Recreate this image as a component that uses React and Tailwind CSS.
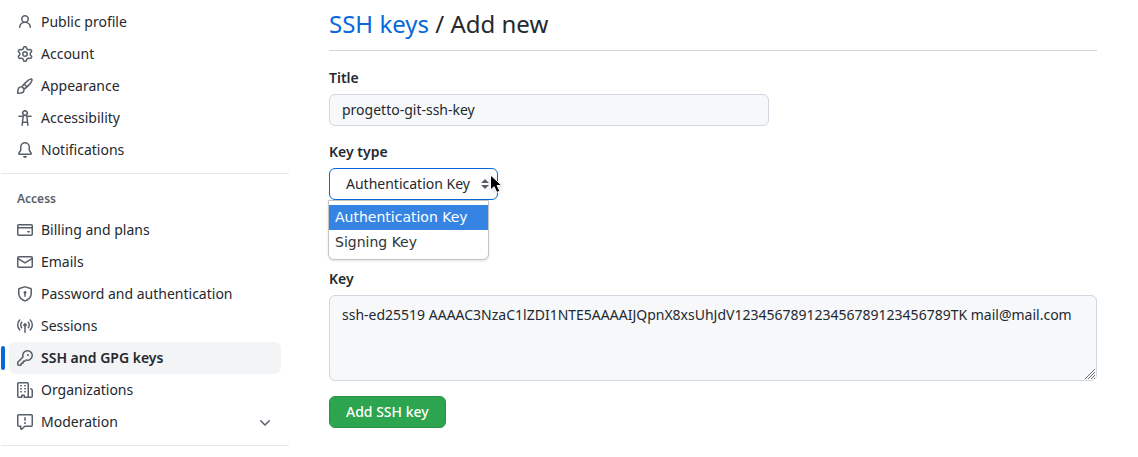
import { useState } from "react";

const ICONS = {
  person:
    "M10.561 8.073a6.005 6.005 0 0 1 3.432 5.142.75.75 0 1 1-1.498.07 4.5 4.5 0 0 0-8.99 0 .75.75 0 0 1-1.498-.07 6.004 6.004 0 0 1 3.431-5.142 3.999 3.999 0 1 1 5.123 0ZM10.5 5a2.5 2.5 0 1 0-5 0 2.5 2.5 0 0 0 5 0Z",
  gear:
    "M8 0a8.2 8.2 0 0 1 .701.031C9.444.095 9.99.645 10.16 1.29l.288 1.107c.018.066.079.158.212.224.231.114.454.243.668.386.123.082.233.09.299.071l1.103-.303c.644-.176 1.392.021 1.82.63.27.385.506.792.704 1.218.315.675.111 1.422-.364 1.891l-.814.806c-.049.048-.098.147-.088.294.016.257.016.515 0 .772-.01.147.038.246.088.294l.814.806c.475.469.679 1.216.364 1.891a7.977 7.977 0 0 1-.704 1.217c-.428.61-1.176.807-1.82.63l-1.102-.302c-.067-.019-.177-.011-.3.071a5.909 5.909 0 0 1-.668.386c-.133.066-.194.158-.211.224l-.29 1.106c-.168.646-.715 1.196-1.458 1.26a8.006 8.006 0 0 1-1.402 0c-.743-.064-1.289-.614-1.458-1.26l-.289-1.106c-.018-.066-.079-.158-.212-.224a5.738 5.738 0 0 1-.668-.386c-.123-.082-.233-.09-.299-.071l-1.103.303c-.644.176-1.392-.021-1.82-.63a8.12 8.12 0 0 1-.704-1.218c-.315-.675-.111-1.422.363-1.891l.815-.806c.05-.048.098-.147.088-.294a6.214 6.214 0 0 1 0-.772c.01-.147-.038-.246-.088-.294l-.815-.806C.635 6.045.431 5.298.746 4.623a7.92 7.92 0 0 1 .704-1.217c.428-.61 1.176-.807 1.82-.63l1.102.302c.067.019.177.011.3-.071.214-.143.437-.272.668-.386.133-.066.194-.158.211-.224l.29-1.106C6.009.645 6.556.095 7.299.03 7.53.01 7.764 0 8 0Zm-.571 1.525c-.036.003-.108.036-.137.146l-.289 1.105c-.147.561-.549.967-.998 1.189-.173.086-.34.183-.5.29-.417.278-.97.423-1.529.27l-1.103-.303c-.109-.03-.175.016-.195.045-.22.312-.412.644-.573.99-.014.031-.021.11.059.19l.815.806c.411.406.562.957.53 1.456a4.709 4.709 0 0 0 0 .582c.032.499-.119 1.05-.53 1.456l-.815.806c-.081.08-.073.159-.059.19.162.346.353.677.573.989.02.03.085.076.195.046l1.102-.303c.56-.153 1.113-.008 1.53.27.161.107.328.204.501.29.447.222.85.629.997 1.189l.289 1.105c.029.109.101.143.137.146a6.6 6.6 0 0 0 1.142 0c.036-.003.108-.036.137-.146l.289-1.105c.147-.561.549-.967.998-1.189.173-.086.34-.183.5-.29.417-.278.97-.423 1.529-.27l1.103.303c.109.029.175-.016.195-.045.22-.313.411-.644.573-.99.014-.031.021-.11-.059-.19l-.815-.806c-.411-.406-.562-.957-.53-1.456a4.709 4.709 0 0 0 0-.582c-.032-.499.119-1.05.53-1.456l.815-.806c.081-.08.073-.159.059-.19a6.464 6.464 0 0 0-.573-.989c-.02-.03-.085-.076-.195-.046l-1.102.303c-.56.153-1.113.008-1.53-.27a4.44 4.44 0 0 0-.501-.29c-.447-.222-.85-.629-.997-1.189l-.289-1.105c-.029-.11-.101-.143-.137-.146a6.6 6.6 0 0 0-1.142 0ZM11 8a3 3 0 1 1-6 0 3 3 0 0 1 6 0ZM9.5 8a1.5 1.5 0 1 0-3.001.001A1.5 1.5 0 0 0 9.5 8Z",
  paintbrush:
    "M11.134 1.535c.7-.509 1.416-.942 2.076-1.155.649-.21 1.463-.267 2.069.34.603.601.568 1.411.368 2.07-.202.668-.624 1.39-1.125 2.096-1.011 1.424-2.496 2.987-3.775 4.249-1.098 1.084-2.132 1.839-3.04 2.3a3.744 3.744 0 0 1-1.055 3.217c-.431.431-1.065.691-1.657.861-.614.177-1.294.287-1.914.357A21.151 21.151 0 0 1 .797 16H.743a.75.75 0 0 1-.743-.742v-.054a21.25 21.25 0 0 1 .13-2.284c.067-.647.187-1.287.358-1.914.17-.591.43-1.226.86-1.657a3.746 3.746 0 0 1 3.227-1.054c.466-.893 1.225-1.907 2.314-2.982 1.271-1.255 2.833-2.75 4.245-3.777ZM1.62 13.089c-.051.464-.086.929-.104 1.395.466-.018.932-.053 1.396-.104a10.511 10.511 0 0 0 1.668-.309c.526-.151.856-.325 1.011-.48a2.25 2.25 0 1 0-3.182-3.182c-.155.155-.329.485-.48 1.01a10.515 10.515 0 0 0-.309 1.67Zm10.396-10.34c-1.224.89-2.605 2.189-3.822 3.384l1.718 1.718c1.21-1.205 2.51-2.597 3.387-3.833.47-.662.78-1.227.912-1.662.134-.444.032-.551.009-.575h-.001V1.78c-.014-.014-.113-.113-.548.027-.432.14-.995.462-1.655.942Zm-4.832 7.266-.001.001a9.859 9.859 0 0 0 1.63-1.142L7.155 7.216a9.7 9.7 0 0 0-1.161 1.607c.482.302.889.71 1.19 1.192Z",
  accessibility:
    "M9.923 5.302c.063.063.122.129.178.198H14A.75.75 0 0 1 14 7h-3.3l.578 5.163.362 2.997a.75.75 0 0 1-1.49.18L9.868 13H6.132l-.282 2.34a.75.75 0 0 1-1.49-.18l.362-2.997L5.3 7H2a.75.75 0 0 1 0-1.5h3.9a2.54 2.54 0 0 1 .176-.198 3 3 0 1 1 3.847 0ZM9.2 7.073h-.001a1.206 1.206 0 0 0-2.398 0L6.305 11.5h3.39ZM9.5 3a1.5 1.5 0 1 0-3.001.001A1.5 1.5 0 0 0 9.5 3Z",
  bell:
    "M8 16a2 2 0 0 0 1.985-1.75c.017-.137-.097-.25-.235-.25h-3.5c-.138 0-.252.113-.235.25A2 2 0 0 0 8 16ZM3 5a5 5 0 0 1 10 0v2.947c0 .05.015.098.042.139l1.703 2.555A1.519 1.519 0 0 1 13.482 13H2.518a1.516 1.516 0 0 1-1.263-2.36l1.703-2.554A.255.255 0 0 0 3 7.947Zm5-3.5A3.5 3.5 0 0 0 4.5 5v2.947c0 .346-.102.683-.294.97l-1.703 2.556a.017.017 0 0 0-.003.01l.001.006c0 .002.002.004.004.006l.006.004.007.001h10.964l.007-.001.006-.004.004-.006.001-.007a.017.017 0 0 0-.003-.01l-1.703-2.554a1.745 1.745 0 0 1-.294-.97V5A3.5 3.5 0 0 0 8 1.5Z",
  card:
    "M10.75 9a.75.75 0 0 0 0 1.5h1.5a.75.75 0 0 0 0-1.5h-1.5ZM0 3.75C0 2.784.784 2 1.75 2h12.5c.966 0 1.75.784 1.75 1.75v8.5A1.75 1.75 0 0 1 14.25 14H1.75A1.75 1.75 0 0 1 0 12.25ZM14.5 6.5h-13v5.75c0 .138.112.25.25.25h12.5a.25.25 0 0 0 .25-.25Zm0-2.75a.25.25 0 0 0-.25-.25H1.75a.25.25 0 0 0-.25.25V5h13Z",
  mail:
    "M1.75 2h12.5c.966 0 1.75.784 1.75 1.75v8.5A1.75 1.75 0 0 1 14.25 14H1.75A1.75 1.75 0 0 1 0 12.25v-8.5C0 2.784.784 2 1.75 2ZM1.5 12.251c0 .138.112.25.25.25h12.5a.25.25 0 0 0 .25-.25V5.809L8.38 9.397a.75.75 0 0 1-.76 0L1.5 5.809v6.442Zm13-8.181v-.32a.25.25 0 0 0-.25-.25H1.75a.25.25 0 0 0-.25.25v.32L8 7.88Z",
  shield:
    "m8.533.133 5.25 1.68A1.75 1.75 0 0 1 15 3.48V7c0 1.566-.32 3.182-1.303 4.682-.983 1.498-2.585 2.813-5.032 3.855a1.697 1.697 0 0 1-1.33 0c-2.447-1.042-4.049-2.357-5.032-3.855C1.32 10.182 1 8.566 1 7V3.48a1.75 1.75 0 0 1 1.217-1.667l5.25-1.68a1.748 1.748 0 0 1 1.066 0Zm-.61 1.429.001.001-5.25 1.68a.251.251 0 0 0-.174.237V7c0 1.36.275 2.666 1.057 3.859.784 1.194 2.121 2.342 4.366 3.298a.196.196 0 0 0 .154 0c2.245-.957 3.582-2.103 4.366-3.297C13.225 9.666 13.5 8.358 13.5 7V3.48a.25.25 0 0 0-.174-.238l-5.25-1.68a.25.25 0 0 0-.153 0ZM9.5 6.5c0 .536-.286 1.032-.75 1.3v2.45a.75.75 0 0 1-1.5 0V7.8A1.5 1.5 0 1 1 9.5 6.5Z",
  broadcast:
    "M8.75 8.582v5.668a.75.75 0 0 1-1.5 0V8.582a1.75 1.75 0 1 1 1.5 0Zm3.983-7.125a.75.75 0 0 1 1.06.026A7.976 7.976 0 0 1 16 7c0 2.139-.84 4.083-2.207 5.517a.75.75 0 1 1-1.086-1.034A6.474 6.474 0 0 0 14.5 7a6.474 6.474 0 0 0-1.793-4.483.75.75 0 0 1 .026-1.06Zm-9.466 0c.3.286.312.76.026 1.06A6.474 6.474 0 0 0 1.5 7a6.47 6.47 0 0 0 1.793 4.483.75.75 0 0 1-1.086 1.034A7.973 7.973 0 0 1 0 7c0-2.139.84-4.083 2.207-5.517a.75.75 0 0 1 1.06-.026Zm8.556 2.321A4.988 4.988 0 0 1 13 7a4.988 4.988 0 0 1-1.177 3.222.75.75 0 1 1-1.146-.967A3.487 3.487 0 0 0 11.5 7c0-.86-.309-1.645-.823-2.255a.75.75 0 0 1 1.146-.967Zm-6.492.958A3.48 3.48 0 0 0 4.5 7a3.48 3.48 0 0 0 .823 2.255.75.75 0 0 1-1.146.967A4.981 4.981 0 0 1 3 7a4.982 4.982 0 0 1 1.188-3.236.75.75 0 1 1 1.143.972Z",
  key:
    "M10.5 0a5.499 5.499 0 1 1-1.288 10.848l-.932.932a.749.749 0 0 1-.53.22H7v.75a.749.749 0 0 1-.22.53l-.5.5a.749.749 0 0 1-.53.22H5v.75a.749.749 0 0 1-.22.53l-.5.5a.749.749 0 0 1-.53.22h-2A1.75 1.75 0 0 1 0 14.25v-2c0-.199.079-.389.22-.53l4.932-4.932A5.5 5.5 0 0 1 10.5 0Zm-4 5.5c-.001.431.069.86.205 1.269a.75.75 0 0 1-.181.768L1.5 12.56v1.69c0 .138.112.25.25.25h1.69l.06-.06v-1.19a.75.75 0 0 1 .75-.75h1.19l.06-.06v-1.19a.75.75 0 0 1 .75-.75h1.19l1.023-1.025a.75.75 0 0 1 .768-.18A4 4 0 1 0 6.5 5.5ZM11 6a1 1 0 1 1 0-2 1 1 0 0 1 0 2Z",
  organization:
    "M1.75 16A1.75 1.75 0 0 1 0 14.25V1.75C0 .784.784 0 1.75 0h8.5C11.216 0 12 .784 12 1.75v12.5c0 .085-.006.168-.018.25h2.268a.25.25 0 0 0 .25-.25V8.285a.25.25 0 0 0-.111-.208l-1.055-.703a.749.749 0 1 1 .832-1.248l1.055.703c.487.325.779.871.779 1.456v5.965A1.75 1.75 0 0 1 14.25 16h-3.5a.766.766 0 0 1-.197-.026c-.099.017-.2.026-.303.026h-3a.75.75 0 0 1-.75-.75V14h-1v1.25a.75.75 0 0 1-.75.75Zm-.25-1.75c0 .138.112.25.25.25H4v-1.25a.75.75 0 0 1 .75-.75h2.5a.75.75 0 0 1 .75.75v1.25h2.25a.25.25 0 0 0 .25-.25V1.75a.25.25 0 0 0-.25-.25h-8.5a.25.25 0 0 0-.25.25ZM3.75 6h.5a.75.75 0 0 1 0 1.5h-.5a.75.75 0 0 1 0-1.5ZM3 3.75A.75.75 0 0 1 3.75 3h.5a.75.75 0 0 1 0 1.5h-.5A.75.75 0 0 1 3 3.75Zm4 3A.75.75 0 0 1 7.75 6h.5a.75.75 0 0 1 0 1.5h-.5A.75.75 0 0 1 7 6.75ZM7.75 3h.5a.75.75 0 0 1 0 1.5h-.5a.75.75 0 0 1 0-1.5ZM3 9.75A.75.75 0 0 1 3.75 9h.5a.75.75 0 0 1 0 1.5h-.5A.75.75 0 0 1 3 9.75ZM7.75 9h.5a.75.75 0 0 1 0 1.5h-.5a.75.75 0 0 1 0-1.5Z",
  report:
    "M0 1.75C0 .784.784 0 1.75 0h12.5C15.216 0 16 .784 16 1.75v9.5A1.75 1.75 0 0 1 14.25 13H8.06l-2.573 2.573A1.458 1.458 0 0 1 3 14.543V13H1.75A1.75 1.75 0 0 1 0 11.25Zm1.75-.25a.25.25 0 0 0-.25.25v9.5c0 .138.112.25.25.25h2a.75.75 0 0 1 .75.75v2.19l2.72-2.72a.749.749 0 0 1 .53-.22h6.5a.25.25 0 0 0 .25-.25v-9.5a.25.25 0 0 0-.25-.25Zm7 2.25v2.5a.75.75 0 0 1-1.5 0v-2.5a.75.75 0 0 1 1.5 0ZM9 9a1 1 0 1 1-2 0 1 1 0 0 1 2 0Z",
  chevron:
    "M12.78 6.22a.749.749 0 0 1 0 1.06l-4.25 4.25a.749.749 0 0 1-1.06 0L3.22 7.28a.749.749 0 1 1 1.06-1.06L8 9.939l3.72-3.719a.749.749 0 0 1 1.06 0Z",
};

const PERSONAL = [
  { icon: "person", label: "Public profile" },
  { icon: "gear", label: "Account" },
  { icon: "paintbrush", label: "Appearance" },
  { icon: "accessibility", label: "Accessibility" },
  { icon: "bell", label: "Notifications" },
];

const ACCESS = [
  { icon: "card", label: "Billing and plans" },
  { icon: "mail", label: "Emails" },
  { icon: "shield", label: "Password and authentication" },
  { icon: "broadcast", label: "Sessions" },
  { icon: "key", label: "SSH and GPG keys", current: true },
  { icon: "organization", label: "Organizations" },
  { icon: "report", label: "Moderation", expandable: true },
];

const KEY_TYPES = ["Authentication Key", "Signing Key"];

function Icon({ name }) {
  return (
    <svg viewBox="0 0 16 16" className="size-4 shrink-0 fill-[#57606a]" aria-hidden="true">
      <path fillRule="evenodd" d={ICONS[name]} />
    </svg>
  );
}

function NavItem({ icon, label, current, expandable }) {
  const row = "flex h-8 w-full items-center gap-2 rounded-md px-2 text-left";
  if (expandable) {
    return (
      <li className="px-2">
        <button type="button" aria-expanded="false" className={row}>
          <Icon name={icon} />
          <span className="grow">{label}</span>
          <Icon name="chevron" />
        </button>
      </li>
    );
  }
  return (
    <li className="relative px-2">
      {current && <span className="absolute top-1 left-0 h-6 w-1 rounded-md bg-[#0969da]" />}
      <a
        href="#"
        aria-current={current ? "page" : undefined}
        className={current ? `${row} bg-[#f3f4f6] font-semibold` : row}
      >
        <Icon name={icon} />
        <span>{label}</span>
      </a>
    </li>
  );
}

function Pointer() {
  return (
    <svg
      viewBox="0 0 14 20"
      className="pointer-events-none absolute top-1.5 left-40 h-5 w-3.5 drop-shadow-sm"
      aria-hidden="true"
    >
      <path
        d="M1.5 1v15l3.6-3.3 2.7 5.8 3-1.4-2.7-5.6h4.7Z"
        className="fill-black stroke-white"
        strokeWidth="1"
      />
    </svg>
  );
}

function ResizeGrip() {
  return (
    <svg
      viewBox="0 0 12 12"
      className="pointer-events-none absolute right-px bottom-px size-3 fill-none stroke-[#6b6f73]"
      aria-hidden="true"
    >
      <rect width="12" height="12" rx="4" className="fill-[#f6f8fa] stroke-none" />
      <path d="M1 11 11 1M4 11l7-7M7 11l4-4M10 11l1-1" strokeWidth="1" />
    </svg>
  );
}

export default function App() {
  const [keyType, setKeyType] = useState(KEY_TYPES[0]);

  return (
    <div className="flex bg-white pl-px font-['Noto_Sans',sans-serif] text-sm text-[#24292f]">
      <nav aria-label="Settings" className="w-72 shrink-0 pt-1.5">
        <ul>
          {PERSONAL.map((item) => (
            <NavItem key={item.label} {...item} />
          ))}
        </ul>
        <hr className="mt-[7px] mb-2 border-[#e5e8eb]" />
        <h2 className="px-4 pt-0.5 text-xs leading-[30px] font-semibold text-[#57606a]">Access</h2>
        <ul>
          {ACCESS.map((item) => (
            <NavItem key={item.label} {...item} />
          ))}
        </ul>
        <hr className="mt-[7px] mb-2 border-[#e5e8eb]" />
      </nav>

      <main className="min-w-0 grow pr-[41px] pl-10">
        <h1 className="border-b border-[#d0d7de] pt-1.5 pb-2 text-2xl leading-9">
          <a href="#" className="text-[#0969da]">SSH keys</a> / Add new
        </h1>

        <form className="mt-[17px] flex flex-col items-start" onSubmit={(e) => e.preventDefault()}>
          <label htmlFor="title" className="leading-5 font-semibold">Title</label>
          <input
            id="title"
            type="text"
            defaultValue="progetto-git-ssh-key"
            className="mt-1.5 h-8 w-[440px] max-w-full rounded-md border border-[#d0d7de] bg-[#f6f8fa] px-3 pb-0.5 leading-5 outline-none"
          />

          <label htmlFor="key-type" className="mt-4 leading-5 font-semibold">Key type</label>
          <div className="relative mt-1.5">
            <select
              id="key-type"
              value={keyType}
              onChange={(e) => setKeyType(e.target.value)}
              className="block h-8 w-[169px] appearance-none rounded-md border border-[#0969da] bg-white pl-4 leading-5 outline-none"
            >
              {KEY_TYPES.map((type) => (
                <option key={type}>{type}</option>
              ))}
            </select>
            <svg
              viewBox="0 0 8 10"
              className="pointer-events-none absolute top-[11px] right-[9px] h-2.5 w-2 fill-[#57606a]"
              aria-hidden="true"
            >
              <path d="M4 0 8 4H0ZM4 10 0 6h8Z" />
            </svg>
            <ul
              role="listbox"
              aria-label="Key type"
              className="absolute top-8 -left-px z-10 w-[161px] rounded-b-md border border-[#c4c4c4] bg-white pt-1 pb-1 font-['DejaVu_Sans',sans-serif] shadow-sm"
            >
              {KEY_TYPES.map((type) => (
                <li
                  key={type}
                  role="option"
                  aria-selected={type === keyType}
                  onClick={() => setKeyType(type)}
                  className={
                    type === keyType
                      ? "bg-[#3584e4] px-1.5 leading-[25px] text-white"
                      : "px-1.5 leading-[25px] text-[#2e3436]"
                  }
                >
                  {type}
                </li>
              ))}
            </ul>
            <Pointer />
          </div>

          <label htmlFor="key" className="mt-[69px] leading-5 font-semibold">Key</label>
          <div className="relative mt-1.5 w-full">
            <textarea
              id="key"
              defaultValue="ssh-ed25519 AAAAC3NzaC1lZDI1NTE5AAAAIJQpnX8xsUhJdV123456789123456789123456789TK mail@mail.com"
              className="block h-[86px] w-full resize-none rounded-md border border-[#d0d7de] bg-[#f6f8fa] px-3 py-[9px] leading-5 outline-none"
            />
            <ResizeGrip />
          </div>

          <button
            type="submit"
            className="mt-[15px] h-8 rounded-md border border-[#2a9149] bg-[#2da44e] px-4 leading-5 font-medium text-white"
          >
            Add SSH key
          </button>
        </form>
      </main>
    </div>
  );
}
